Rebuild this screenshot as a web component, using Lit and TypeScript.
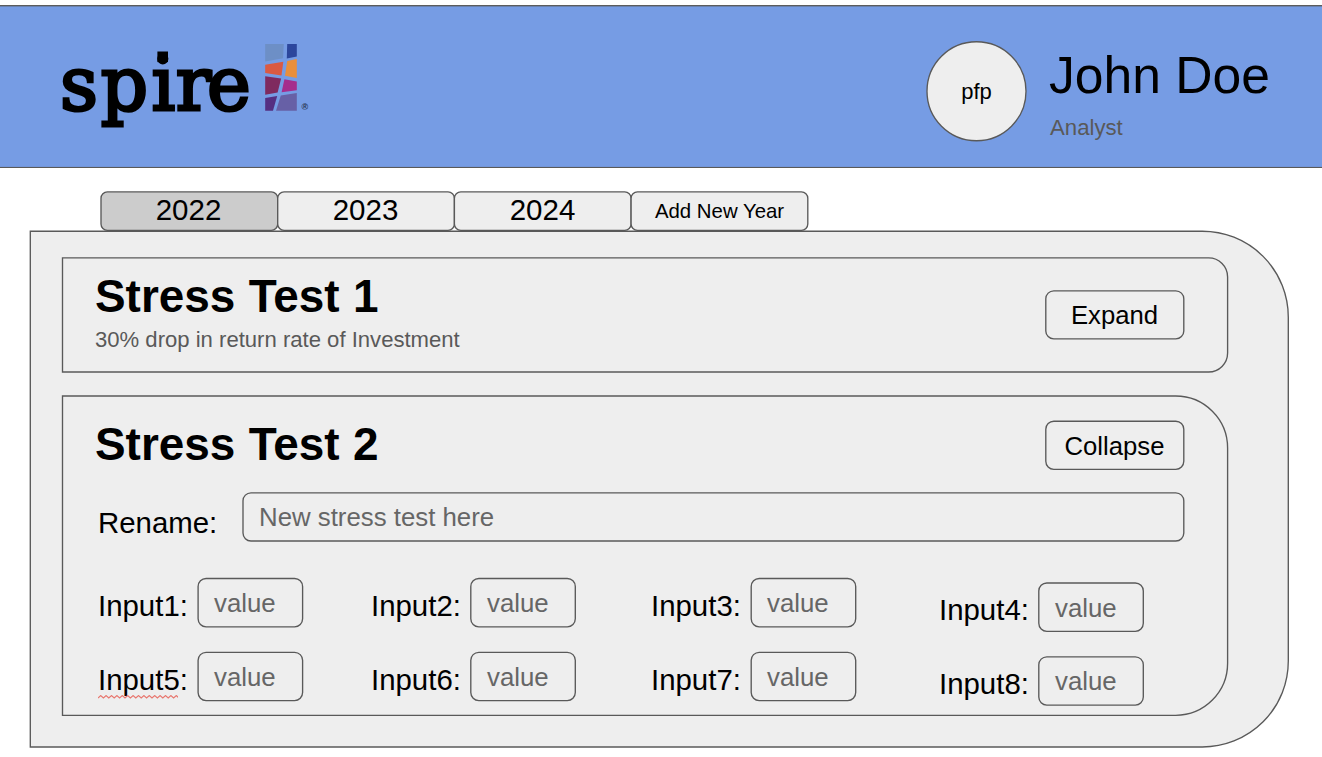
import { LitElement, html, svg, css, nothing } from "lit";
import { customElement } from "lit/decorators.js";

const LINE = "#595959";

/** Thin outlined box that fills its grid cell; dx/dy are sub-pixel offsets. */
const frame = (dx: number, dy: number, w: number, h: number, r: number, fill = "#eeeeee") => html`
  <svg class="frame" width=${Math.ceil(w)} height=${Math.ceil(h)} aria-hidden="true">
    <rect x=${dx} y=${dy} width=${w} height=${h} rx=${r} fill=${fill} stroke=${LINE} stroke-width="1.35"></rect>
  </svg>`;

/** Same box, rounded on the right-hand side only. */
const sideFrame = (dx: number, dy: number, w: number, h: number, r: number) => {
  const d = `M${dx} ${dy}h${w - r}a${r} ${r} 0 0 1 ${r} ${r}v${h - 2 * r}a${r} ${r} 0 0 1 ${-r} ${r}h${r - w}z`;
  return html`
    <svg class="frame" width=${Math.ceil(w)} height=${Math.ceil(h)} aria-hidden="true">
      <path d=${d} fill="#eeeeee" stroke=${LINE} stroke-width="1.35"></path>
    </svg>`;
};

const squiggle = () => {
  let d = "M0 3";
  for (let i = 0; i < 15; i++) d += "l2.7 -2.4l2.7 2.4";
  return html`<svg class="squiggle" width="80" height="4" aria-hidden="true">
    ${svg`<path d=${d} fill="none" stroke="#e8776f" stroke-width="1.2"></path>`}
  </svg>`;
};

const YEARS = [
  { label: "2022", active: true, dx: 1 },
  { label: "2023", dx: 0.7 },
  { label: "2024", dx: 0.4 },
  { label: "Add New Year", small: true, dx: 0.1 },
];

@customElement("app-root")
export class AppRoot extends LitElement {
  static styles = css`
    :host {
      display: block;
      width: 1322px;
      height: 757px;
      overflow: hidden;
      background: #fff;
      color: #000;
      font-family: "Liberation Sans", Arial, sans-serif;
      white-space: nowrap;
    }
    svg { display: block; }
    .stack { display: grid; grid-template-columns: minmax(0, 1fr); align-items: start; justify-items: start; }
    .stack > * { grid-area: 1 / 1; }
    .frame { overflow: visible; }

    .header { margin-top: 5px; height: 163px; overflow: hidden; }
    .header-row { display: flex; width: 100%; height: 163px; }
    .logo { margin-left: 55px; }
    .avatar { margin: 36px 0 0 611px; width: 101px; height: 101px; }
    .avatar-text { width: 101px; text-align: center; font-size: 22px; line-height: 102px; }
    .who { margin: 41px 0 0 17px; }
    .name { margin-left: 5px; font-size: 51.6px; line-height: 58px; }
    .role { margin: 11px 0 0 6px; font-size: 22.2px; line-height: 26px; color: #595959; }

    .tabs { display: flex; padding-left: 100px; margin-top: 23px; height: 40px; }
    .tab { width: 177px; height: 40px; }
    .tab-text { width: 177px; text-align: center; font-size: 29.5px; line-height: 38px; }
    .tab-text.small { font-size: 20.4px; line-height: 40px; }

    .panel { margin-left: 30px; width: 1259px; height: 517px; }
    .cards { padding: 26px 0 0 32px; }
    .card { width: 1166px; }
    .c1 { height: 115px; margin-bottom: 23px; }
    .c2 { height: 321px; }
    .row { display: flex; width: 1089px; justify-content: space-between; }
    .body { padding-left: 33px; width: 1089px; }
    .title { font-size: 45.9px; font-weight: 700; line-height: 52px; word-spacing: 0.6px; }
    .c1 .title { margin-top: 13px; }
    .c2 .title { margin-top: 23px; }
    .sub { font-size: 22.1px; line-height: 26px; color: #595959; margin-top: 5px; }
    .btn { width: 138px; height: 49px; }
    .c1 .btn { margin-top: 33px; }
    .c2 .btn { margin-top: 26px; }
    .btn-text { width: 137px; text-align: center; font-size: 25.7px; line-height: 50px; }

    .rename { display: flex; margin-top: 22px; padding-left: 3px; }
    .label { font-size: 29.4px; line-height: 34px; }
    .rename .label { width: 145px; margin-top: 14px; }
    .rename-box { width: 941px; height: 49px; }
    .ph { padding-left: 16px; font-size: 25.8px; line-height: 50px; color: #666; }

    .grid { display: grid; grid-template-columns: 273px 280px 288px 210px; grid-auto-rows: 74px; margin-top: 37px; padding-left: 3px; }
    .field { display: flex; }
    .low { margin-top: 4px; }
    .field .label { position: relative; width: 100px; margin-top: 11px; }
    .field-box { width: 105px; height: 49px; }
    .low.first .ph { line-height: 52px; }
    .squiggle { position: absolute; left: 0; top: 32px; }
  `;

  private logo() {
    return html`
      <svg class="logo" width="260" height="163" viewBox="55 5 260 163" role="img" aria-label="spire">
        <text x="60 100.7 151.6 175.8 207" y="109.6" font-family="DejaVu Serif" font-size="74" stroke="#000" stroke-width="3">spire</text>
        <rect x="157.4" y="51.5" width="10.6" height="10.6"></rect>
        <path d="M265.2 44h18.6l-.8 14.2-17.8 3.4z" fill="#6d8fc6"></path>
        <path d="M287.2 44h9.6v12.6l-10 1.8z" fill="#2c469c"></path>
        <path d="M265.2 64.8l18.1-3-1.8 13.8-16.3-2.6z" fill="#da5a43"></path>
        <path d="M287.2 61l9.6-2v19l-11.8-2.2z" fill="#e98f3c"></path>
        <path d="M265.2 76.3l15.9 2.2-3.5 14-12.4 2.2z" fill="#7f2a5f"></path>
        <path d="M284.4 79.2l12.4 2.4v8.6l-15.2 2z" fill="#a52d8d"></path>
        <path d="M265.2 98l12-2-4.2 14.8h-7.8z" fill="#552f82"></path>
        <path d="M280.8 95.6l16-2.6v17.8h-20.8z" fill="#6760a6"></path>
        <text x="301.4" y="110.4" font-family="Liberation Sans" font-size="9" font-weight="700" fill="#26344f">®</text>
      </svg>`;
  }

  private field(n: number) {
    const col = (n - 1) % 4;
    const row = n > 4 ? 1 : 0;
    const dx = [0.1, -0.2, 0.2, -0.2][col];
    const dy = (col === 3 ? 1 : 0.5) - row * 0.2;
    return html`
      <div class="field ${col === 3 ? "low" : ""} ${row === 0 ? "first" : ""}">
        <div class="label">Input${n}:${n === 5 ? squiggle() : nothing}</div>
        <div class="stack field-box">${frame(dx, dy, 104.5, 48.3, 8)}<div class="ph">value</div></div>
      </div>`;
  }

  render() {
    return html`
      <header class="header stack">
        ${frame(-5, 0.7, 1332, 161.9, 0, "#769ce4")}
        <div class="header-row">
          ${this.logo()}
          <div class="avatar stack">
            ${frame(1, 0.7, 99, 99, 49.5)}
            <div class="avatar-text">pfp</div>
          </div>
          <div class="who">
            <div class="name">John Doe</div>
            <div class="role">Analyst</div>
          </div>
        </div>
      </header>
      <nav class="tabs">
        ${YEARS.map((y) => html`
          <div class="tab stack">
            ${frame(y.dx, 0.9, 176.7, 38.5, 6.4, y.active ? "#cccccc" : "#eeeeee")}
            <div class="tab-text ${y.small ? "small" : ""}">${y.label}</div>
          </div>`)}
      </nav>
      <main class="panel stack">
        ${sideFrame(0.3, 0.2, 1258, 515.8, 86)}
        <div class="cards">
          <section class="card c1 stack">
            ${sideFrame(0.5, 0.9, 1165.1, 114.1, 19)}
            <div class="row body">
              <div>
                <div class="title">Stress Test 1</div>
                <div class="sub">30% drop in return rate of Investment</div>
              </div>
              <div class="btn stack">${frame(-0.2, 0.8, 138, 48.1, 8)}<div class="btn-text">Expand</div></div>
            </div>
          </section>
          <section class="card c2 stack">
            ${sideFrame(0.5, 1, 1165.1, 319.3, 52)}
            <div class="body">
              <div class="row">
                <div class="title">Stress Test 2</div>
                <div class="btn stack">${frame(-0.2, 0.2, 138, 48.1, 8)}<div class="btn-text">Collapse</div></div>
              </div>
              <div class="rename">
                <div class="label">Rename:</div>
                <div class="stack rename-box">${frame(0, 0.8, 940.8, 48.2, 8)}<div class="ph">New stress test here</div></div>
              </div>
              <div class="grid">${[1, 2, 3, 4, 5, 6, 7, 8].map((n) => this.field(n))}</div>
            </div>
          </section>
        </div>
      </main>`;
  }
}
